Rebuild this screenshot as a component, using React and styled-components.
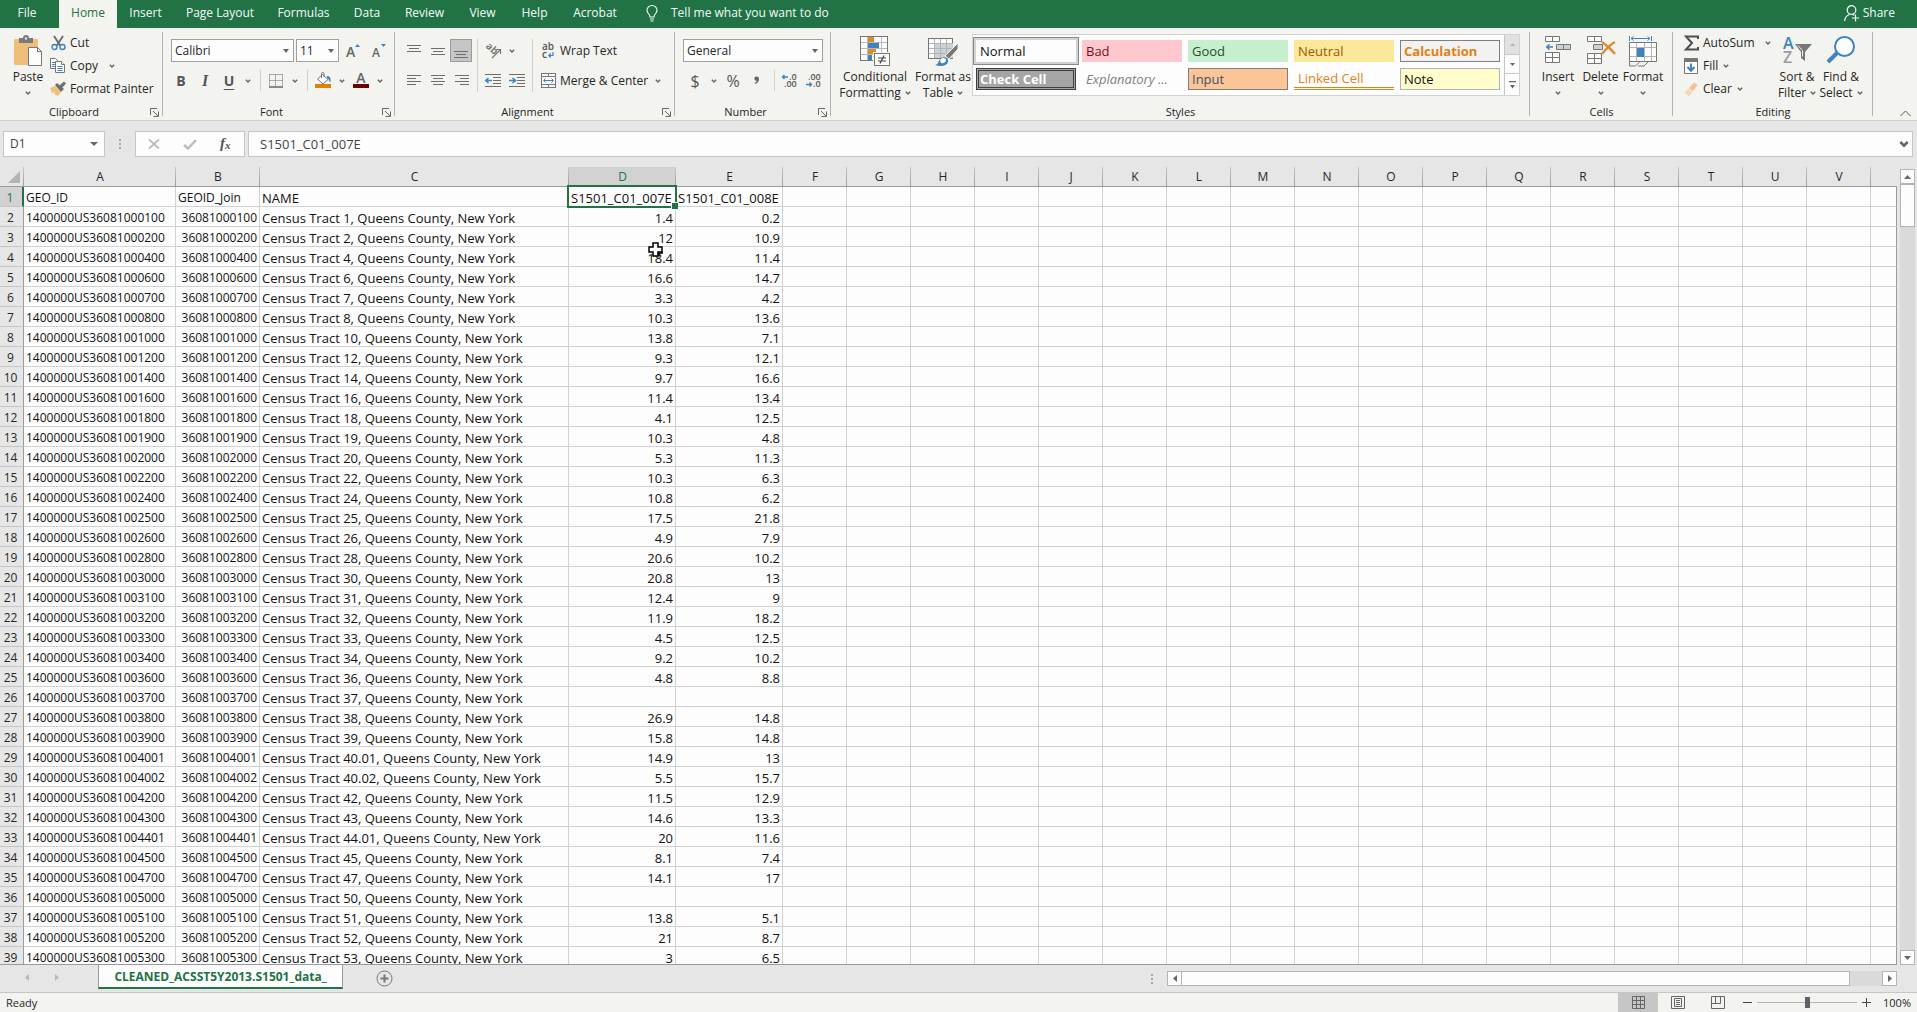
import React from 'react';
import styled, { createGlobalStyle, css } from 'styled-components';

const GlobalStyle = createGlobalStyle`
  * {
    box-sizing: border-box;
  }

  body {
    margin: 0;
    overflow: hidden;
  }

  button, input, select {
    font: inherit;
    color: inherit;
    margin: 0;
    padding: 0;
    border: 0;
    background: none;
    border-radius: 0;
  }

  svg {
    display: block;
    flex: none;
    overflow: visible;
  }
`;

const uiFont = '"Open Sans", "Noto Sans", sans-serif';
const green = '#217346';

const Page = styled.div`
  display: flex;
  flex-direction: column;
  height: 100vh;
  background: #e6e6e6;
  color: #262626;
  font-family: ${uiFont};
  font-size: 12px;
  line-height: 16px;
`;

/* ---------- tab bar ---------- */

const TabBar = styled.nav`
  display: flex;
  height: 28px;
  flex: none;
  background: ${green};
  color: #f5faf7;
`;

const Tab = styled.button`
  width: ${props => props.$width}px;
  padding-bottom: 2px;
  white-space: nowrap;

  &:first-child {
    padding-right: 5px;
  }

  ${props => props.$active && css`
    background: #f3f3ef;
    color: ${green};
  `}
`;

const BarButton = styled.button`
  display: flex;
  align-items: center;
  gap: ${props => props.$gap}px;
  padding-bottom: 2px;
  margin-left: ${props => (props.$end ? 'auto' : '16px')};
  margin-right: ${props => (props.$end ? '22px' : '0')};
`;

/* ---------- ribbon ---------- */

const Ribbon = styled.div`
  display: flex;
  height: 93px;
  flex: none;
  background: #f3f3ef;
  border-bottom: 1px solid #d2d2d2;
`;

const GroupBox = styled.section`
  display: flex;
  flex-direction: column;
  position: relative;
  flex: ${props => (props.$width ? `0 0 ${props.$width}px` : '1 1 0')};
  min-width: 0;

  &::after {
    content: '';
    position: absolute;
    right: 0;
    top: 4px;
    bottom: 4px;
    width: 1px;
    background: #b4b4b2;
  }
`;

const GroupBody = styled.div`
  display: flex;
  flex: 1;
  min-height: 0;
  padding: ${props => props.$pad};
`;

const GroupFoot = styled.div`
  display: flex;
  align-items: center;
  height: 16px;
  font-size: 11px;
  text-align: center;

  > span {
    flex: 1;
  }
`;

const Launcher = styled.button`
  display: grid;
  place-items: center;
  width: 12px;
  height: 16px;
  margin-right: 3px;
`;

const Stack = styled.div`
  display: flex;
  flex-direction: column;
  gap: ${props => props.$gap || 0}px;
  width: ${props => (props.$width ? `${props.$width}px` : 'auto')};
`;

const Row = styled.div`
  display: flex;
  align-items: center;
  height: 23px;
`;

const IconButton = styled.button`
  display: grid;
  place-items: center;
  width: 24px;
  height: 23px;
  color: #55555a;
  font-size: 14px;
  ${props => props.$pressed && css`
    width: 22px;
    background: #c6c6c6;
    border: 1px solid #9b9b9b;
  `}
`;

const GlyphButton = styled(IconButton)`
  font-weight: ${props => (props.$bold ? 700 : 400)};
  font-style: ${props => (props.$italic ? 'italic' : 'normal')};
  text-decoration: ${props => (props.$underline ? 'underline' : 'none')};
  text-underline-offset: 3px;
  font-size: ${props => props.$size || 14}px;
  font-family: ${props => props.$family || uiFont};
`;

const ArrowButton = styled.button`
  display: grid;
  place-items: center;
  width: 14px;
  height: 23px;
`;

const SmallSep = styled.span`
  width: 1px;
  height: 21px;
  margin: 0 3px 0 5px;
  background: #d0d0ce;
`;

const TallSep = styled.span`
  width: 1px;
  height: 53px;
  margin: 0 3px;
  background: #d0d0ce;
`;

const ToolButton = styled.button`
  display: flex;
  align-items: center;
  gap: 4px;
  height: 23px;
  white-space: nowrap;
  text-align: left;
`;

const ToolIcon = styled.span`
  display: grid;
  place-items: center;
  width: 16px;
`;

const ToolArrow = styled.span`
  margin-left: ${props => props.$space || 2}px;
`;

const BigButton = styled.button`
  display: flex;
  flex-direction: column;
  align-items: center;
  width: ${props => props.$width}px;
  white-space: nowrap;

  > svg {
    margin-bottom: 2px;
  }
`;

const BigLine = styled.span`
  display: flex;
  align-items: center;
  justify-content: center;
  gap: 4px;
  height: 16px;
`;

const Combo = styled.label`
  display: grid;
  align-items: center;
  width: ${props => props.$width}px;
  height: 23px;
  background: #fdfdfd;
  border: 1px solid #a0a0a0;

  > select, > svg {
    grid-area: 1 / 1;
  }

  > select {
    width: 100%;
    padding-left: 3px;
    appearance: none;
    outline: none;
  }

  > svg {
    justify-self: end;
    margin-right: 4px;
    pointer-events: none;
  }
`;

const Gallery = styled.div`
  display: flex;
  flex: 1;
  height: 62px;
  background: #fdfdfd;
  border: 1px solid #d2d2d2;
  font-size: 13px;
`;

const GalleryGrid = styled.div`
  display: grid;
  flex: 1;
  grid-template-columns: repeat(5, 1fr);
  grid-auto-rows: 22px;
  gap: 6px;
  padding: 5px 4px 5px 3px;
`;

const StyleCell = styled.button`
  position: relative;
  padding: 0 3px 1px;
  text-align: left;
  white-space: nowrap;
  color: ${props => props.$color || '#111'};
  background: ${props => props.$bg || 'transparent'};
  border: 1px solid ${props => props.$line || 'transparent'};
  font-weight: ${props => (props.$bold ? 700 : 400)};
  font-style: ${props => (props.$italic ? 'italic' : 'normal')};
  ${props => props.$selected && css`
    outline: 2px solid #d2d2d2;
    box-shadow: 0 0 0 3px #8a8a8a;
  `}
  ${props => props.$double && css`
    border: 3px double #3f3f3f;
    padding: 0 1px;
  `}
  ${props => props.$under && css`
    border-width: 0;
    border-bottom: 3px double #e08214;
    padding: 0 4px;
  `}
`;

const GalleryScroll = styled.div`
  display: grid;
  grid-template-rows: 20px 19px 1fr;
  width: 15px;
  border-left: 1px solid #c6c6c6;
`;

const GalleryArrow = styled.button`
  display: grid;
  place-items: center;
  background: ${props => (props.$off ? '#e1e1e1' : '#fdfdfd')};
  border-bottom: 1px solid #c6c6c6;

  &:last-child {
    border-bottom: 0;
  }
`;

const RibbonEnd = styled.div`
  display: flex;
  flex: 0 0 44px;
  align-items: flex-end;
  justify-content: center;
  padding: 0 0 3px 20px;
`;

/* ---------- formula bar ---------- */

const FormulaRow = styled.div`
  display: flex;
  align-items: center;
  flex: none;
  height: 46px;
  padding: 0 4px 0 3px;
  color: #444;
`;

const Field = styled.div`
  display: flex;
  align-items: center;
  height: 26px;
  min-width: 0;
  background: #fdfdfd;
  border: 1px solid #c6c6c6;
  flex: ${props => (props.$width ? `0 0 ${props.$width}px` : '1')};
  padding-right: ${props => props.$end || 0}px;
  font-size: ${props => props.$size || 12}px;

  > input {
    flex: 1;
    width: 100%;
    min-width: 0;
    padding-left: ${props => props.$indent || 0}px;
    outline: none;
  }
`;

const DotsBox = styled.span`
  display: grid;
  place-items: center;
  width: 30px;
`;

const FormulaTools = styled(Field)`
  justify-content: space-around;
  margin-right: 3px;
`;

const FormulaButton = styled.button`
  display: grid;
  place-items: center;
  width: 24px;
  height: 22px;
`;

/* ---------- sheet ---------- */

const SheetArea = styled.main`
  display: flex;
  flex: 1;
  min-height: 0;
`;

const SheetFrame = styled.div`
  position: relative;
  flex: 1;
  min-width: 0;
  overflow: hidden;
  border-bottom: 1px solid #9b9b9b;
`;

const Table = styled.table`
  width: 100%;
  table-layout: fixed;
  border-collapse: separate;
  border-spacing: 0;
  font-size: 12px;
  line-height: 16px;
  color: #111;
`;

const ColHead = styled.th`
  height: 20px;
  padding: 0;
  font-weight: 400;
  color: ${props => (props.$on ? green : '#262626')};
  border-bottom: 1px solid #9b9b9b;
  background: linear-gradient(#c8c8c8, #9b9b9b) right / 1px 100% no-repeat ${props => (props.$on ? '#d2d2d2' : '#e6e6e6')};

  &:last-child {
    background: #e6e6e6;
  }
`;

const Corner = styled(ColHead)`
  > svg {
    margin-left: 8px;
  }
`;

const RowHead = styled.th`
  height: 20px;
  padding: 3px 2px 0 0;
  font-weight: 400;
  color: ${props => (props.$on ? green : '#262626')};
  background: ${props => (props.$on ? '#d2d2d2' : '#e6e6e6')};
  border-bottom: 1px solid #c6c6c6;
  border-right: ${props => (props.$on ? `2px solid ${green}` : '1px solid #9b9b9b')};
`;

const Cell = styled.td`
  position: relative;
  height: 20px;
  padding: 3px 2px 0;
  white-space: nowrap;
  font-size: ${props => (props.$wide ? 13 : 12)}px;
  text-align: ${props => (props.$num ? 'right' : 'left')};
  background: #fdfdfd;
  border-right: 1px solid #d2d2d2;
  border-bottom: 1px solid #d2d2d2;

  &:last-child {
    border-right-color: #9b9b9b;
  }
`;

const Selection = styled.span`
  position: absolute;
  z-index: 1;
  inset: -2px;
  border: 2px solid ${green};

  &::after {
    content: '';
    position: absolute;
    right: -3px;
    bottom: -3px;
    width: 6px;
    height: 6px;
    background: ${green};
    border: solid #fdfdfd;
    border-width: 1px 0 0 1px;
  }
`;

const Pointer = styled.svg`
  position: absolute;
  z-index: 2;
  left: 648px;
  top: 75px;
`;

const VScroll = styled.div`
  display: flex;
  flex-direction: column;
  width: 15px;
  margin: 2px 2px 0 3px;
  background: #d9dbda;
`;

const ScrollButton = styled.button`
  display: grid;
  place-items: center;
  flex: none;
  width: 15px;
  height: 15px;
  background: #fdfdfd;
  border: 1px solid #b4b4b4;
`;

const VThumb = styled.div`
  height: 43px;
  margin-bottom: auto;
  background: #fdfdfd;
  border: 1px solid #b4b4b4;
`;

/* ---------- sheet tabs and status ---------- */

const SheetBar = styled.div`
  display: flex;
  align-items: center;
  flex: none;
  height: 28px;
  padding-right: 20px;
  border-bottom: 1px solid #c6c6c6;
`;

const SheetNav = styled.div`
  display: flex;
  justify-content: space-between;
  width: 98px;
  padding: 0 36px 2px 22px;
`;

const NavButton = styled.button`
  display: grid;
  place-items: center;
  width: 10px;
  height: 16px;
`;

const SheetTab = styled.button`
  align-self: flex-start;
  width: 245px;
  height: 25px;
  margin-top: -1px;
  padding-top: 2px;
  background: #fdfdfd;
  border: solid #9b9b9b;
  border-width: 0 1px;
  border-bottom: 2px solid ${green};
  color: ${green};
  font-weight: 700;
  white-space: nowrap;
`;

const AddSheet = styled.button`
  margin: 0 auto 0 33px;
`;

const HScroll = styled.div`
  display: flex;
  flex: 0 0 730px;
  background: #d9dbda;
`;

const HThumb = styled.div`
  flex: 0 0 669px;
  margin-left: -1px;
  margin-right: auto;
  background: #fdfdfd;
  border: 1px solid #b4b4b4;
`;

const StatusBar = styled.footer`
  display: flex;
  align-items: center;
  flex: none;
  height: 19px;
  padding: 0 6px;
  background: #f3f3ef;
  font-size: 11px;
`;

const ReadyText = styled.span`
  margin-right: auto;
`;

const ViewButton = styled.button`
  display: grid;
  place-items: center;
  width: 40px;
  height: 19px;
  background: ${props => (props.$on ? '#c6c6c6' : 'none')};
`;

const ZoomButton = styled.button`
  display: grid;
  place-items: center;
  width: 19px;
  height: 19px;
`;

const ZoomSlider = styled.input`
  width: 100px;
  height: 11px;
  appearance: none;
  background: linear-gradient(#b4b4b4, #b4b4b4) center / 100% 1px no-repeat;

  &::-webkit-slider-thumb {
    appearance: none;
    width: 5px;
    height: 11px;
    background: #645e66;
  }
`;

const ZoomLabel = styled.button`
  width: 35px;
  text-align: right;
`;

/* ---------- icons ---------- */

const Chevron = ({ size = 6, width = 1.5, color = '#666' }) => (
  <svg width={size} height={size} viewBox="0 0 6 6" fill="none" stroke={color} strokeWidth={width}>
    <path d="M.8 1.8 3 4 5.2 1.8" />
  </svg>
);

const Caret = ({ w = 6, h = 4, dir = 'down', color = '#666' }) => {
  const shapes = {
    down: '0,0 10,0 5,10',
    up: '0,10 10,10 5,0',
    left: '10,0 10,10 0,5',
    right: '0,0 0,10 10,5',
  };
  return (
    <svg width={w} height={h} viewBox="0 0 10 10" preserveAspectRatio="none" fill={color}>
      <polygon points={shapes[dir]} />
    </svg>
  );
};

const LauncherIcon = () => (
  <svg width="9" height="9" viewBox="0 0 9 9" fill="none" stroke="#666">
    <path d="M.5 7V.5H7M3 3l5 5M8.500 3.500v5h-5" />
  </svg>
);

const PasteIcon = () => (
  <svg width="30" height="31" viewBox="0 0 30 31">
    <rect x="1" y="3" width="24" height="26" rx="1" fill="#eebf78" />
    <path d="M6 2h4a3 3 0 0 1 6 0h4v5H6z" fill="#7a7a7a" />
    <rect x="12" y="1.500" width="2" height="2" fill="#f3f3ef" />
    <path d="M15.500 11.500h9l4 4v14h-13z" fill="#fdfdfd" stroke="#777" />
    <path d="M24.500 11.500v4h4" fill="none" stroke="#777" />
  </svg>
);

const CutIcon = () => (
  <svg width="15" height="16" viewBox="0 0 15 16" fill="none">
    <path d="M3 1l6.500 10M12 1L5.500 11" stroke="#6e6e6e" strokeWidth="2" />
    <circle cx="3.500" cy="12" r="2.500" stroke="#3e83bd" strokeWidth="1.400" />
    <circle cx="11.500" cy="12" r="2.500" stroke="#3e83bd" strokeWidth="1.400" />
  </svg>
);

const CopyIcon = () => (
  <svg width="16" height="15" viewBox="0 0 16 15" fill="#fdfdfd" stroke="#777">
    <path d="M.5.5h5l2 2v8h-7z" />
    <path d="M2 4.500h3M2 6.500h3M2 8.500h3" stroke="#3e83bd" />
    <path d="M5.500 3.500h6l3 3v8h-9z" />
    <path d="M11.500 3.500v3h3" />
    <path d="M7.500 8.500h5M7.500 10.500h5M7.500 12.500h5" stroke="#3e83bd" />
  </svg>
);

const PainterIcon = () => (
  <svg width="16" height="15" viewBox="0 0 16 15">
    <path d="M0 7l5-2 6 6-3 4-4-2 1-2-3 1z" fill="#eebf78" />
    <path d="M5 4l2-2 7 6-3 3z" fill="#6e6e6e" />
    <path d="M9.500 4.500L14 .5l2 2-4 4.500z" fill="#6e6e6e" />
  </svg>
);

const FontSizeIcon = ({ up }) => (
  <svg width="16" height="16" viewBox="0 0 16 16">
    <text x="1" y="14" fontFamily="Open Sans" fontWeight="600" fontSize={up ? 14 : 12} fill="#666">A</text>
    <polygon points={up ? '10,4 15,4 12.500,1' : '10,1 15,1 12.500,4'} fill="#3e83bd" />
  </svg>
);

const BordersIcon = () => (
  <svg width="14" height="14" viewBox="0 0 14 14" fill="none" stroke="#666">
    <path d="M.5.5h13M.5.5v12M13.500.5v12M6.500.5v12M.5 6.500h13" strokeDasharray="1 1" />
    <path d="M0 13h14" strokeWidth="1.500" />
  </svg>
);

const FillColorIcon = () => (
  <svg width="17" height="17" viewBox="0 0 17 17" fill="none">
    <path d="M2.500 7l5-4.500 5.500 5-5 4.500z" fill="#fdfdfd" stroke="#777" />
    <path d="M6.500 6V1.500c0-1.500 2.500-1.500 2.500 0V5" stroke="#777" />
    <path d="M12 4c3 0 4 2 3.500 6-2-.5-1-3-3.500-4z" fill="#3e83bd" />
    <rect y="12" width="16" height="4" fill="#e08200" />
  </svg>
);

const FontColorIcon = () => (
  <svg width="17" height="17" viewBox="0 0 17 17">
    <text x="8" y="11" textAnchor="middle" fontFamily="Open Sans" fontWeight="600" fontSize="14" fill="#666">A</text>
    <rect y="12" width="16" height="4" fill="#6e0000" />
  </svg>
);

// each line is [x start, x end], drawn from the top down
const Lines = ({ rows, top = 1, step = 3 }) => (
  <svg width="14" height="14" viewBox="0 0 14 14" stroke="#6e6e6e">
    {rows.map(([a, b], i) => (
      <path key={i} d={`M${a} ${top + i * step + 0.5}H${b}`} />
    ))}
  </svg>
);

const IndentIcon = ({ right }) => (
  <svg width="17" height="14" viewBox="0 0 17 14" fill="none" stroke="#6e6e6e">
    <path d="M0 .5h16M8 3.500h8M8 6.500h8M8 9.500h8M0 12.500h16" />
    <path d={right ? 'M0 6.500h6M3.500 4l3 2.500-3 2.500' : 'M7 6.500H1M3.500 4L.8 6.500l2.700 2.500'} stroke="#3e83bd" strokeWidth="1.600" />
  </svg>
);

const OrientationIcon = () => (
  <svg width="16" height="16" viewBox="0 0 16 16">
    <text x="0" y="7" transform="rotate(42 4 6)" fontFamily="Open Sans" fontWeight="600" fontSize="10" fill="#666">ab</text>
    <path d="M7 15L15 7M11 6.500h4.500V11" fill="none" stroke="#777" strokeWidth="1.200" />
  </svg>
);

const WrapIcon = () => (
  <svg width="14" height="16" viewBox="0 0 14 16">
    <text fontFamily="Open Sans" fontWeight="600" fontSize="10" fill="#555">
      <tspan x="1" y="7">ab</tspan>
      <tspan x="1" y="15">c</tspan>
    </text>
    <path d="M12 9v3.500H8M9.800 10.500l-2 2 2 2" fill="none" stroke="#3e83bd" strokeWidth="1.200" />
  </svg>
);

const MergeIcon = () => (
  <svg width="15" height="15" viewBox="0 0 15 15" fill="none" stroke="#777">
    <rect x=".5" y=".5" width="14" height="14" fill="#fdfdfd" />
    <path d="M.5 3.500h14M.5 11.500h14M7.500.5v3M7.500 11.500v3" />
    <path d="M3 7.500h9M4.500 5.500l-2 2 2 2M10.500 5.500l2 2-2 2" stroke="#3e83bd" />
  </svg>
);

const CommaIcon = () => (
  <svg width="6" height="9" viewBox="0 0 6 9" fill="#666">
    <path d="M.5 1.500C2 0 5 .2 5 3c0 2.600-1.500 4.400-4 5l-.3-1C2 6.500 2.600 5.800 2.700 4.800 1 5 0 3 .5 1.500z" />
  </svg>
);

const DecimalIcon = ({ more }) => (
  <svg width="16" height="15" viewBox="0 0 16 15">
    <text fontFamily="Open Sans" fontWeight="600" fontSize="9" fill="#555">
      <tspan x={more ? 7 : 2} y="7">{more ? '.0' : '.00'}</tspan>
      <tspan x={more ? 2 : 7} y="14">{more ? '.00' : '.0'}</tspan>
    </text>
    <path
      d={more ? 'M6 4H.5M2.500 2l-2 2 2 2' : 'M0 11.500h5.500M3.500 9.500l2 2-2 2'}
      fill="none"
      stroke="#3e83bd"
      strokeWidth="1.400"
    />
  </svg>
);

const ConditionalIcon = () => (
  <svg width="30" height="31" viewBox="0 0 30 31">
    <rect x=".5" y=".5" width="27" height="24" fill="#fdfdfd" stroke="#777" />
    <path d="M7.500 1v23M21.500 1v23M1 6.500h26M1 12.500h26M1 18.500h26" stroke="#b9b9b9" />
    <rect x="8" y="1" width="6" height="5" fill="#d98b2e" />
    <rect x="8" y="7" width="11" height="5" fill="#3e83bd" />
    <rect x="8" y="13" width="8" height="5" fill="#d98b2e" />
    <rect x="8" y="19" width="4" height="5" fill="#3e83bd" />
    <rect x="13" y="16" width="17" height="15" fill="#f3f3ef" />
    <rect x="14.500" y="17.500" width="15" height="12" fill="#fdfdfd" stroke="#777" />
    <path d="M18 22h8M18 25h8M24 19.500l-4 8" stroke="#444" strokeWidth="1.200" />
  </svg>
);

const TableIcon = () => (
  <svg width="30" height="31" viewBox="0 0 30 31">
    <rect x=".5" y="2.500" width="24" height="20" fill="#fdfdfd" stroke="#777" />
    <rect x="7" y="8" width="18" height="14" fill="#c9d3d4" />
    <path d="M6.500 3v19M12.500 3v19M18.500 3v19M1 7.500h24M1 12.500h24M1 17.500h24" stroke="#b4b4b4" />
    <path d="M30 7v6l-9 10-4-3z" fill="#777" stroke="#f3f3ef" />
    <path d="M7 29c4-1 3-4 6-7 3-2 8 0 7 4-1 4-7 5-13 3z" fill="#3e83bd" />
    <path d="M12 24c2-3 6-2 6 0s-3 4-5 3z" fill="#fdfdfd" />
  </svg>
);

const InsertIcon = () => (
  <svg width="28" height="31" viewBox="0 0 28 31" fill="#fdfdfd" stroke="#777">
    <path d="M1.500.5h14v5h-14zM8.500.5v5M1.500 16.500h14v10h-14zM8.500 16.500v10M1.500 21.500h14" />
    <path d="M12.500 8.500h14v5h-14zM19.500 8.500v5" fill="#c9d3d4" />
    <path d="M9 11H3M5.500 8.500L2.800 11l2.700 2.500" fill="none" stroke="#3e83bd" strokeWidth="1.600" />
  </svg>
);

const DeleteIcon = () => (
  <svg width="30" height="31" viewBox="0 0 30 31" fill="#fdfdfd" stroke="#777">
    <path d="M1.500.5h14v5h-14zM8.500.5v5M1.500 17.500h14v10h-14zM8.500 17.500v10M1.500 22.500h14" />
    <path d="M7.500 8.500h9v5h-9z" fill="#c9d3d4" />
    <path d="M16 6c3 2 9 7 13 12M29 6c-4 2-9 7-13 12" fill="none" stroke="#dd8b33" strokeWidth="2.400" />
  </svg>
);

const FormatIcon = () => (
  <svg width="30" height="31" viewBox="0 0 30 31" fill="none">
    <path d="M1.500 0v5M23.500 0v5M3 2.500h19M5.500.5l-2.500 2 2.500 2M19.500.5l2.500 2-2.500 2" stroke="#3e83bd" />
    <path d="M1.500 6.500h27v19h-27z" fill="#fdfdfd" stroke="#777" />
    <path d="M8.500 7v18M16.500 7v18M23.500 7v18M2 11.500h26M2 20.500h26" stroke="#b4b4b4" />
    <rect x="9" y="12" width="7" height="9" fill="#3e83bd" />
    <path d="M1.500 26v4h6l4-4M10 30h6l4-4" stroke="#777" />
  </svg>
);

const SumIcon = () => (
  <svg width="15" height="16" viewBox="0 0 15 16" fill="none" stroke="#4f4f4f" strokeWidth="2">
    <path d="M14 4V1.500H2L8 8l-6 6.500h12V12" />
  </svg>
);

const FillIcon = () => (
  <svg width="14" height="16" viewBox="0 0 14 16" fill="none">
    <path d="M.5.5h13v15H.5z" fill="#fdfdfd" stroke="#777" />
    <path d="M0 0h14v4H0z" fill="#777" />
    <path d="M7 5.500v7M3.500 9L7 12.800 10.500 9" stroke="#3e83bd" strokeWidth="2" />
  </svg>
);

const ClearIcon = () => (
  <svg width="14" height="14" viewBox="0 0 14 14">
    <path d="M5 6l5-5.500 3.500 2.500-5 6.500z" fill="#f6bf94" />
    <path d="M4 7.500l3.500 3L5 13.500 1.500 11z" fill="#fcd9bd" stroke="#e9b189" strokeWidth=".6" />
  </svg>
);

const SortIcon = () => (
  <svg width="30" height="31" viewBox="0 0 30 31">
    <text fontFamily="Open Sans" fontSize="16" fontWeight="600">
      <tspan x="1" y="13" fill="#3e83bd">A</tspan>
      <tspan x="1" y="27" fill="#9a9a9a">Z</tspan>
    </text>
    <path d="M13 8h17l-7 8v9l-4-3v-6z" fill="#777" />
    <path d="M16 9.500l4.500 5v6" fill="none" stroke="#f3f3ef" />
  </svg>
);

const FindIcon = () => (
  <svg width="28" height="31" viewBox="0 0 28 31">
    <path d="M1 26L10 17" stroke="#3e83bd" strokeWidth="4" />
    <circle cx="17.500" cy="10.500" r="9.500" fill="#fdfdfd" stroke="#3e83bd" strokeWidth="2" />
  </svg>
);

const BulbIcon = () => (
  <svg width="12" height="17" viewBox="0 0 12 17" fill="none" stroke="#f5faf7" strokeWidth="1.100">
    <path d="M4 12c0-3-3-3.500-3-6.500a5 5 0 0 1 10 0C11 8.500 8 9 8 12zM4 14h4M4.500 16h3" />
  </svg>
);

const ShareIcon = () => (
  <svg width="15" height="17" viewBox="0 0 15 17" fill="none" stroke="#f5faf7" strokeWidth="1.200">
    <circle cx="7.500" cy="5" r="4.300" />
    <path d="M.7 16c0-3 2-5.500 4.800-6.500M8.500 9.500l2 .8M11.500 9.500v7M8 13h7" />
  </svg>
);

const Dots = () => (
  <svg width="2" height="10" viewBox="0 0 2 10" fill="#aaa">
    <path d="M0 0h2v2H0zM0 4h2v2H0zM0 8h2v2H0z" />
  </svg>
);

/* ---------- data ---------- */

const tabs = [
  ['File', 59],
  ['Home', 58],
  ['Insert', 57],
  ['Page Layout', 92],
  ['Formulas', 75],
  ['Data', 52],
  ['Review', 63],
  ['View', 53],
  ['Help', 51],
  ['Acrobat', 70],
];

const cellStyles = [
  { name: 'Normal', $selected: true, $bg: '#fdfdfd' },
  { name: 'Bad', $bg: '#ffc7ce', $color: '#7a1016' },
  { name: 'Good', $bg: '#c6efce', $color: '#1f4f2a' },
  { name: 'Neutral', $bg: '#fce89b', $color: '#9c5700' },
  { name: 'Calculation', $bg: '#f2f2f2', $color: '#e08214', $line: '#7f7f7f', $bold: true },
  { name: 'Check Cell', $bg: '#a5a5a5', $color: '#fff', $bold: true, $double: true },
  { name: 'Explanatory ...', $color: '#7f7f7f', $italic: true },
  { name: 'Input', $bg: '#fcc595', $color: '#3f4f76', $line: '#7f7f7f' },
  { name: 'Linked Cell', $color: '#e08214', $under: true },
  { name: 'Note', $bg: '#fefdcb', $line: '#b2b2b2' },
];

const columns = [
  152, 84, 309, 107, 107,
  ...Array(17).fill(64),
];

const tracts = [
  ['1', 1.4, 0.2], ['2', 12, 10.9], ['4', 18.4, 11.4], ['6', 16.6, 14.7],
  ['7', 3.3, 4.2], ['8', 10.3, 13.6], ['10', 13.8, 7.1], ['12', 9.3, 12.1],
  ['14', 9.7, 16.6], ['16', 11.4, 13.4], ['18', 4.1, 12.5], ['19', 10.3, 4.8],
  ['20', 5.3, 11.3], ['22', 10.3, 6.3], ['24', 10.8, 6.2], ['25', 17.5, 21.8],
  ['26', 4.9, 7.9], ['28', 20.6, 10.2], ['30', 20.8, 13], ['31', 12.4, 9],
  ['32', 11.9, 18.2], ['33', 4.5, 12.5], ['34', 9.2, 10.2], ['36', 4.8, 8.8],
  ['37', '', ''], ['38', 26.9, 14.8], ['39', 15.8, 14.8], ['40.01', 14.9, 13],
  ['40.02', 5.5, 15.7], ['42', 11.5, 12.9], ['43', 14.6, 13.3], ['44.01', 20, 11.6],
  ['45', 8.1, 7.4], ['47', 14.1, 17], ['50', '', ''], ['51', 13.8, 5.1],
  ['52', 21, 8.7], ['53', 3, 6.5],
];

const geoId = tract => {
  const [whole, part = '00'] = tract.split('.');
  return `36081${whole.padStart(4, '0')}${part}`;
};

const rows = [
  ['GEO_ID', 'GEOID_Join', 'NAME', 'S1501_C01_007E', 'S1501_C01_008E'],
  ...tracts.map(([tract, d, e]) => [
    `1400000US${geoId(tract)}`,
    geoId(tract),
    `Census Tract ${tract}, Queens County, New York`,
    d,
    e,
  ]),
];

/* ---------- parts ---------- */

const Group = ({ title, width, pad, launcher, children }) => (
  <GroupBox $width={width} aria-label={title}>
    <GroupBody $pad={pad}>{children}</GroupBody>
    <GroupFoot>
      <span>{title}</span>
      {launcher && (
        <Launcher aria-label={`${title} settings`}>
          <LauncherIcon />
        </Launcher>
      )}
    </GroupFoot>
  </GroupBox>
);

const Tool = ({ icon, label, arrow }) => (
  <ToolButton>
    <ToolIcon>{icon}</ToolIcon>
    {label}
    {arrow && (
      <ToolArrow $space={arrow}>
        <Chevron />
      </ToolArrow>
    )}
  </ToolButton>
);

const Big = ({ icon, lines, width }) => (
  <BigButton $width={width}>
    {icon}
    <BigLine>{lines[0]}</BigLine>
    <BigLine>
      {lines[1]}
      <Chevron />
    </BigLine>
  </BigButton>
);

const Drop = ({ label }) => (
  <ArrowButton aria-label={label}>
    <Chevron />
  </ArrowButton>
);

const ComboBox = ({ label, value, width }) => (
  <Combo $width={width}>
    <select aria-label={label} defaultValue={value}>
      <option>{value}</option>
    </select>
    <Caret />
  </Combo>
);

const ClipboardTools = styled(Stack)`
  margin: -5px 0 0 2px;
`;

const FontRow = styled(Row)`
  gap: 2px;
  padding-left: 2px;
`;

const WrapTools = styled(Stack)`
  gap: 7px;
  padding-left: 4px;
`;

const StyleTools = styled.div`
  display: flex;
  padding-top: 2px;
`;

const EditTools = styled(Stack)`
  width: 92px;
  margin-top: -5px;
`;

const RibbonBar = () => (
  <Ribbon>
    <Group title="Clipboard" width={163} pad="8px 0 0 8px" launcher>
      <Big icon={<PasteIcon />} lines={['Paste', '']} width={40} />
      <ClipboardTools>
        <Tool icon={<CutIcon />} label="Cut" />
        <Tool icon={<CopyIcon />} label="Copy" arrow={7} />
        <Tool icon={<PainterIcon />} label="Format Painter" />
      </ClipboardTools>
    </Group>

    <Group title="Font" width={232} pad="11px 0 0 6px" launcher>
      <Stack $gap={7}>
        <FontRow>
          <ComboBox label="Font" value="Calibri" width={123} />
          <ComboBox label="Font size" value="11" width={43} />
          <IconButton aria-label="Increase font size"><FontSizeIcon up /></IconButton>
          <IconButton aria-label="Decrease font size"><FontSizeIcon /></IconButton>
        </FontRow>
        <Row>
          <GlyphButton $bold>B</GlyphButton>
          <GlyphButton $bold $italic $family='"Liberation Serif", serif' $size={16}>I</GlyphButton>
          <GlyphButton $bold $underline>U</GlyphButton>
          <Drop label="Underline options" />
          <SmallSep />
          <IconButton aria-label="Borders"><BordersIcon /></IconButton>
          <Drop label="Border options" />
          <SmallSep />
          <IconButton aria-label="Fill color"><FillColorIcon /></IconButton>
          <Drop label="Fill color options" />
          <IconButton aria-label="Font color"><FontColorIcon /></IconButton>
          <Drop label="Font color options" />
        </Row>
      </Stack>
    </Group>

    <Group title="Alignment" width={280} pad="11px 0 0 7px" launcher>
      <Stack $gap={7} $width={72}>
        <Row>
          <IconButton aria-label="Top align"><Lines rows={[[0, 14], [2, 12], [0, 14]]} /></IconButton>
          <IconButton aria-label="Middle align"><Lines top={4} rows={[[0, 14], [2, 12], [0, 14]]} /></IconButton>
          <IconButton aria-label="Bottom align" $pressed><Lines top={7} rows={[[0, 14], [2, 12], [0, 14]]} /></IconButton>
        </Row>
        <Row>
          <IconButton aria-label="Align left"><Lines rows={[[0, 14], [0, 9], [0, 14], [0, 9]]} /></IconButton>
          <IconButton aria-label="Center"><Lines rows={[[0, 14], [2, 12], [0, 14], [2, 12]]} /></IconButton>
          <IconButton aria-label="Align right"><Lines rows={[[0, 14], [5, 14], [0, 14], [5, 14]]} /></IconButton>
        </Row>
      </Stack>
      <TallSep />
      <Stack $gap={7} $width={48}>
        <Row>
          <IconButton aria-label="Orientation"><OrientationIcon /></IconButton>
          <Drop label="Orientation options" />
        </Row>
        <Row>
          <IconButton aria-label="Decrease indent"><IndentIcon /></IconButton>
          <IconButton aria-label="Increase indent"><IndentIcon right /></IconButton>
        </Row>
      </Stack>
      <TallSep />
      <WrapTools>
        <Tool icon={<WrapIcon />} label="Wrap Text" />
        <Tool icon={<MergeIcon />} label="Merge &amp; Center" arrow={3} />
      </WrapTools>
    </Group>

    <Group title="Number" width={156} pad="11px 0 0 8px" launcher>
      <Stack $gap={7}>
        <ComboBox label="Number format" value="General" width={140} />
        <Row>
          <GlyphButton aria-label="Currency" $size={16}>$</GlyphButton>
          <Drop label="Currency options" />
          <GlyphButton aria-label="Percent" $size={16}>%</GlyphButton>
          <IconButton aria-label="Comma style"><CommaIcon /></IconButton>
          <SmallSep />
          <IconButton aria-label="Increase decimal"><DecimalIcon more /></IconButton>
          <IconButton aria-label="Decrease decimal"><DecimalIcon /></IconButton>
        </Row>
      </Stack>
    </Group>

    <Group title="Styles" pad="6px 10px 0 5px">
      <StyleTools>
        <Big icon={<ConditionalIcon />} lines={['Conditional', 'Formatting']} width={78} />
        <Big icon={<TableIcon />} lines={['Format as', 'Table']} width={58} />
      </StyleTools>
      <Gallery>
        <GalleryGrid>
          {cellStyles.map(({ name, ...look }) => (
            <StyleCell key={name} {...look}>{name}</StyleCell>
          ))}
        </GalleryGrid>
        <GalleryScroll>
          <GalleryArrow $off aria-label="Previous styles"><Caret w={5} h={3} dir="up" color="#b4b4b4" /></GalleryArrow>
          <GalleryArrow aria-label="Next styles"><Caret w={5} h={3} /></GalleryArrow>
          <GalleryArrow aria-label="More styles">
            <svg width="7" height="8" viewBox="0 0 7 8" fill="#666">
              <path d="M0 0h7v1.200H0zM1 4h5L3.500 7.500z" />
            </svg>
          </GalleryArrow>
        </GalleryScroll>
      </Gallery>
    </Group>

    <Group title="Cells" width={143} pad="8px 0 0 7px">
      <Big icon={<InsertIcon />} lines={['Insert', '']} width={42} />
      <Big icon={<DeleteIcon />} lines={['Delete', '']} width={43} />
      <Big icon={<FormatIcon />} lines={['Format', '']} width={42} />
    </Group>

    <Group title="Editing" width={200} pad="8px 0 0 10px">
      <EditTools>
        <Tool icon={<SumIcon />} label="AutoSum" arrow={6} />
        <Tool icon={<FillIcon />} label="Fill" arrow={1} />
        <Tool icon={<ClearIcon />} label="Clear" arrow={1} />
      </EditTools>
      <Big icon={<SortIcon />} lines={['Sort &', 'Filter']} width={44} />
      <Big icon={<FindIcon />} lines={['Find &', 'Select']} width={44} />
    </Group>

    <RibbonEnd>
      <button aria-label="Collapse the ribbon">
        <svg width="11" height="7" viewBox="0 0 11 7" fill="none" stroke="#555">
          <path d="M.5 6l5-5 5 5" />
        </svg>
      </button>
    </RibbonEnd>
  </Ribbon>
);

const FormulaBar = () => (
  <FormulaRow>
    <Field $width={102} $indent={6} $end={6}>
      <input aria-label="Name box" defaultValue="D1" />
      <Caret w={8} h={4} />
    </Field>
    <DotsBox><Dots /></DotsBox>
    <FormulaTools $width={110}>
      <FormulaButton aria-label="Cancel">
        <svg width="12" height="10" viewBox="0 0 12 10" stroke="#bdbdbd" strokeWidth="1.800">
          <path d="M1 .5l10 9M11 .5l-10 9" />
        </svg>
      </FormulaButton>
      <FormulaButton aria-label="Enter">
        <svg width="14" height="11" viewBox="0 0 14 11" fill="none" stroke="#bdbdbd" strokeWidth="2.400">
          <path d="M1 6l4 3.500L13 1" />
        </svg>
      </FormulaButton>
      <FormulaButton aria-label="Insert function">
        <svg width="14" height="16" viewBox="0 0 14 16">
          <text fontFamily="Liberation Serif" fontStyle="italic" fontWeight="700" fill="#555">
            <tspan x="1" y="12" fontSize="15">f</tspan>
            <tspan x="6" y="13" fontSize="11">x</tspan>
          </text>
        </svg>
      </FormulaButton>
    </FormulaTools>
    <Field $indent={11} $end={3} $size={13}>
      <input aria-label="Formula" defaultValue="S1501_C01_007E" />
      <button aria-label="Expand formula bar"><Chevron size={10} width={1.6} /></button>
    </Field>
  </FormulaRow>
);

const Sheet = () => (
  <SheetArea>
    <SheetFrame>
      <Table>
        <colgroup>
          <col width="24" />
          {columns.map((width, i) => <col key={i} width={width} />)}
          <col />
        </colgroup>
        <thead>
          <tr>
            <Corner aria-label="Select all">
              <svg width="12" height="12" viewBox="0 0 12 12"><path d="M12 0v12H0z" fill="#b4b4b4" /></svg>
            </Corner>
            {columns.map((_, i) => (
              <ColHead key={i} $on={i === 3}>{String.fromCharCode(65 + i)}</ColHead>
            ))}
            <ColHead />
          </tr>
        </thead>
        <tbody>
          {rows.map((row, r) => (
            <tr key={r}>
              <RowHead $on={r === 0}>{r + 1}</RowHead>
              {columns.map((_, c) => (
                <Cell key={c} $wide={c > 1} $num={r > 0 && (c === 1 || c > 2)}>
                  {row[c]}
                  {r === 0 && c === 3 && <Selection />}
                </Cell>
              ))}
              <Cell />
            </tr>
          ))}
        </tbody>
      </Table>
      <Pointer width="16" height="16" viewBox="0 0 16 16">
        <path d="M5 1h5v4h4v5h-4v4H5v-4H1V5h4z" fill="#fdfdfd" stroke="#000" strokeWidth="1.500" />
        <path d="M11 14.500v-3.500h4" fill="none" stroke="#000" strokeWidth="1.500" />
      </Pointer>
    </SheetFrame>
    <VScroll>
      <ScrollButton aria-label="Scroll up"><Caret w={7} h={4} dir="up" /></ScrollButton>
      <VThumb />
      <ScrollButton aria-label="Scroll down"><Caret w={7} h={4} /></ScrollButton>
    </VScroll>
  </SheetArea>
);

const SheetTabs = () => (
  <SheetBar>
    <SheetNav>
      <NavButton aria-label="Previous sheet"><Caret w={4} h={7} dir="left" color="#b9b9b9" /></NavButton>
      <NavButton aria-label="Next sheet"><Caret w={4} h={7} dir="right" color="#b9b9b9" /></NavButton>
    </SheetNav>
    <SheetTab>CLEANED_ACSST5Y2013.S1501_data_</SheetTab>
    <AddSheet aria-label="New sheet">
      <svg width="17" height="17" viewBox="0 0 17 17" fill="none" stroke="#777">
        <circle cx="8.500" cy="8.500" r="7.500" />
        <path d="M8.500 4.500v8M4.500 8.500h8" strokeWidth="2" />
      </svg>
    </AddSheet>
    <DotsBox><Dots /></DotsBox>
    <HScroll>
      <ScrollButton aria-label="Scroll left"><Caret w={4} h={7} dir="left" /></ScrollButton>
      <HThumb />
      <ScrollButton aria-label="Scroll right"><Caret w={4} h={7} dir="right" /></ScrollButton>
    </HScroll>
  </SheetBar>
);

const Status = () => (
  <StatusBar>
    <ReadyText>Ready</ReadyText>
    <ViewButton $on aria-label="Normal view">
      <svg width="13" height="13" viewBox="0 0 13 13" fill="none" stroke="#666">
        <path d="M.5.5h12v12H.5zM4.500.5v12M8.500.5v12M.5 4.500h12M.5 8.500h12" />
      </svg>
    </ViewButton>
    <ViewButton aria-label="Page layout view">
      <svg width="14" height="13" viewBox="0 0 14 13" fill="none" stroke="#666">
        <path d="M.5.5h13v12H.5zM3.500 2.500h7v8h-7zM5 4.500h4M5 6.500h4M5 8.500h4" />
      </svg>
    </ViewButton>
    <ViewButton aria-label="Page break preview">
      <svg width="14" height="13" viewBox="0 0 14 13" fill="none" stroke="#666">
        <path d="M.5.5h13v12H.5zM4.500.5v7M9.500.5v7M.5 7.500h9" />
      </svg>
    </ViewButton>
    <ZoomButton aria-label="Zoom out">
      <svg width="9" height="9" stroke="#444"><path d="M0 4.500h9" /></svg>
    </ZoomButton>
    <ZoomSlider type="range" min="0" max="100" defaultValue="50" aria-label="Zoom" />
    <ZoomButton aria-label="Zoom in">
      <svg width="9" height="9" stroke="#444"><path d="M0 4.500h9M4.500 0v9" /></svg>
    </ZoomButton>
    <ZoomLabel>100%</ZoomLabel>
  </StatusBar>
);

const App = () => (
  <>
    <GlobalStyle />
    <Page>
      <TabBar>
        {tabs.map(([name, width]) => (
          <Tab key={name} $width={width} $active={name === 'Home'}>{name}</Tab>
        ))}
        <BarButton $gap={13}>
          <BulbIcon />
          Tell me what you want to do
        </BarButton>
        <BarButton $gap={4} $end>
          <ShareIcon />
          Share
        </BarButton>
      </TabBar>
      <RibbonBar />
      <FormulaBar />
      <Sheet />
      <SheetTabs />
      <Status />
    </Page>
  </>
);

export default App;
